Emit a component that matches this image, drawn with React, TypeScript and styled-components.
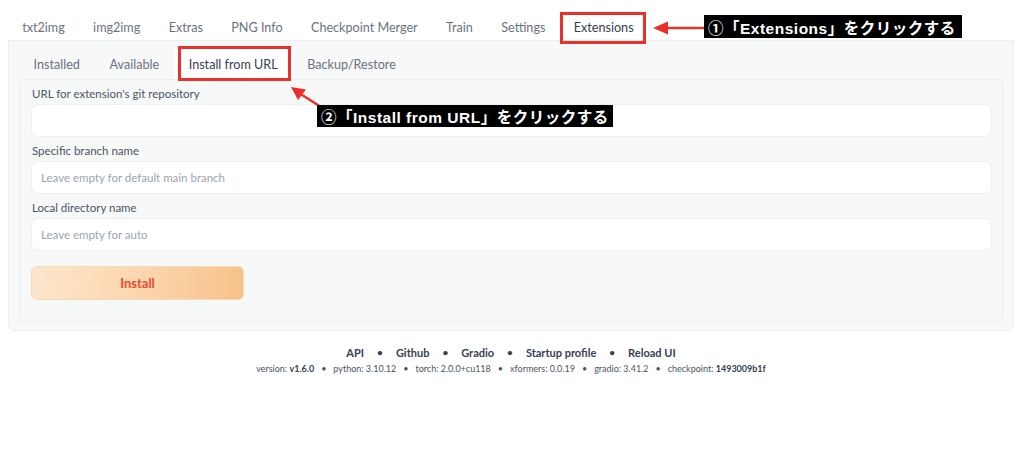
import React from "react";
import styled, { createGlobalStyle } from "styled-components";

const Global = createGlobalStyle`
  html, body { margin: 0; padding: 0; background: #ffffff; }
  body { font-family: Lato, "Noto Sans", sans-serif; color: #374151; }
  * { box-sizing: border-box; }
`;

const Page = styled.div`
  position: relative;
  width: 1024px;
  height: 473px;
  padding: 0 10px 0 8px;
  overflow: hidden;
`;

const TabBar = styled.div`
  display: flex;
  align-items: flex-end;
  height: 40px;
  padding-left: 0px;
`;

const Tab = styled.div<{ $active?: boolean }>`
  height: 26px;
  display: flex;
  align-items: center;
  padding: 0 14.2px;
  font-size: 12.6px;
  color: ${(p) => (p.$active ? "#374151" : "#6b7280")};
  background: ${(p) => (p.$active ? "#ffffff" : "transparent")};
  white-space: nowrap;
`;

const Panel = styled.div`
  border: 1px solid #eceeee;
  border-radius: 0 0 6px 6px;
  background: #f7f8f8;
  padding: 0 10px 8px 10px;
  height: 291px;
`;

const SubTabBar = styled.div`
  display: flex;
  align-items: flex-end;
  height: 38px;
`;

const SubTab = styled.div<{ $active?: boolean }>`
  height: 30px;
  display: flex;
  align-items: center;
  padding: 0 15px 0 14.6px;
  font-size: 12.6px;
  color: ${(p) => (p.$active ? "#374151" : "#6b7280")};
  background: ${(p) => (p.$active ? "#ffffff" : "transparent")};
  white-space: nowrap;
`;

const Inner = styled.div`
  border: 1px solid #eceeee;
  border-radius: 4px;
  background: #f7f8f8;
  padding: 7px 10px 0 11px;
  height: 243px;
  display: flex;
  flex-direction: column;
`;

const Field = styled.div`
  display: flex;
  flex-direction: column;
  margin-bottom: 7px;
`;

const Label = styled.div`
  font-size: 11.5px;
  color: #4b5563;
  height: 14px;
  line-height: 14px;
  margin-bottom: 3px;
  padding-left: 1px;
`;

const Input = styled.div`
  height: 33px;
  background: #ffffff;
  border: 1px solid #eef0f0;
  border-radius: 7px;
  display: flex;
  align-items: center;
  padding-left: 9px;
  font-size: 11.5px;
  color: #9ca3af;
`;

const InstallButton = styled.div`
  margin-top: 8px;
  width: 213px;
  height: 34px;
  border-radius: 6px;
  border: 1px solid #f8d9b8;
  background: linear-gradient(100deg, #fde6cd 0%, #fbd5ab 55%, #f7c189 100%);
  display: flex;
  align-items: center;
  justify-content: center;
  font-size: 13px;
  font-weight: 700;
  color: #ee4a2c;
`;

const Footer = styled.div`
  display: flex;
  flex-direction: column;
  align-items: center;
  margin-top: 14px;
`;

const Links = styled.div`
  display: flex;
  align-items: center;
  gap: 13px;
  font-size: 11px;
  font-weight: 700;
  color: #374151;
  height: 14px;
`;

const Dot = styled.span`
  font-weight: 700;
  font-size: 10px;
`;

const Versions = styled.div`
  margin-top: 4px;
  display: flex;
  gap: 7px;
  font-size: 9px;
  color: #4b5563;
  b { color: #374151; }
`;

const Highlight = styled.div<{ $x: number; $y: number; $w: number; $h: number }>`
  position: absolute;
  left: ${(p) => p.$x}px;
  top: ${(p) => p.$y}px;
  width: ${(p) => p.$w}px;
  height: ${(p) => p.$h}px;
  border: 3px solid #e8312b;
`;

const Note = styled.div<{ $x: number; $y: number; $w: number; $h: number }>`
  position: absolute;
  left: ${(p) => p.$x}px;
  top: ${(p) => p.$y}px;
  width: ${(p) => p.$w}px;
  height: ${(p) => p.$h}px;
  background: #000000;
  color: #ffffff;
  font-family: "Liberation Sans", "Noto Sans CJK JP", sans-serif;
  font-weight: 700;
  font-size: 15.5px;
  display: flex;
  align-items: center;
  padding-left: 4px;
  white-space: nowrap;
  letter-spacing: 0.5px;
`;

const ArrowSvg = styled.svg<{ $x: number; $y: number }>`
  position: absolute;
  left: ${(p) => p.$x}px;
  top: ${(p) => p.$y}px;
  overflow: visible;
`;

const topTabs = ["txt2img", "img2img", "Extras", "PNG Info", "Checkpoint Merger", "Train", "Settings", "Extensions"];
const subTabs = ["Installed", "Available", "Install from URL", "Backup/Restore"];
const links = ["API", "Github", "Gradio", "Startup profile", "Reload UI"];

export default function App() {
  return (
    <>
      <Global />
      <Page>
        <TabBar>
          {topTabs.map((t) => (
            <Tab key={t} $active={t === "Extensions"}>{t}</Tab>
          ))}
        </TabBar>
        <Panel>
          <SubTabBar>
            {subTabs.map((t) => (
              <SubTab key={t} $active={t === "Install from URL"}>{t}</SubTab>
            ))}
          </SubTabBar>
          <Inner>
            <Field>
              <Label>URL for extension's git repository</Label>
              <Input />
            </Field>
            <Field>
              <Label>Specific branch name</Label>
              <Input>Leave empty for default main branch</Input>
            </Field>
            <Field>
              <Label>Local directory name</Label>
              <Input>Leave empty for auto</Input>
            </Field>
            <InstallButton>Install</InstallButton>
          </Inner>
        </Panel>
        <Footer>
          <Links>
            {links.map((l, i) => (
              <React.Fragment key={l}>
                {i > 0 && <Dot>•</Dot>}
                <span>{l}</span>
              </React.Fragment>
            ))}
          </Links>
          <Versions>
            <span>version: <b>v1.6.0</b></span>
            <span>•</span>
            <span>python: 3.10.12</span>
            <span>•</span>
            <span>torch: 2.0.0+cu118</span>
            <span>•</span>
            <span>xformers: 0.0.19</span>
            <span>•</span>
            <span>gradio: 3.41.2</span>
            <span>•</span>
            <span>checkpoint: <b>1493009b1f</b></span>
          </Versions>
        </Footer>

        <Highlight $x={560} $y={12} $w={86} $h={32} />
        <Highlight $x={178} $y={46} $w={113} $h={35} />

        <ArrowSvg $x={652} $y={20} width="52" height="16" viewBox="0 0 52 16">
          <line x1="14" y1="8" x2="52" y2="8" stroke="#e8312b" strokeWidth="2.5" />
          <polygon points="1,8 16,1.5 16,14.5" fill="#e8312b" />
        </ArrowSvg>
        <Note $x={704} $y={15} $w={258} $h={23}>①「Extensions」をクリックする</Note>

        <ArrowSvg $x={290} $y={86} width="32" height="22" viewBox="0 0 32 22">
          <line x1="9" y1="7" x2="31" y2="21" stroke="#e8312b" strokeWidth="2.5" />
          <polygon points="1,1 16,3.5 8,14" fill="#e8312b" />
        </ArrowSvg>
        <Note $x={317} $y={105} $w={296} $h={22}>②「Install from URL」をクリックする</Note>
      </Page>
    </>
  );
}
